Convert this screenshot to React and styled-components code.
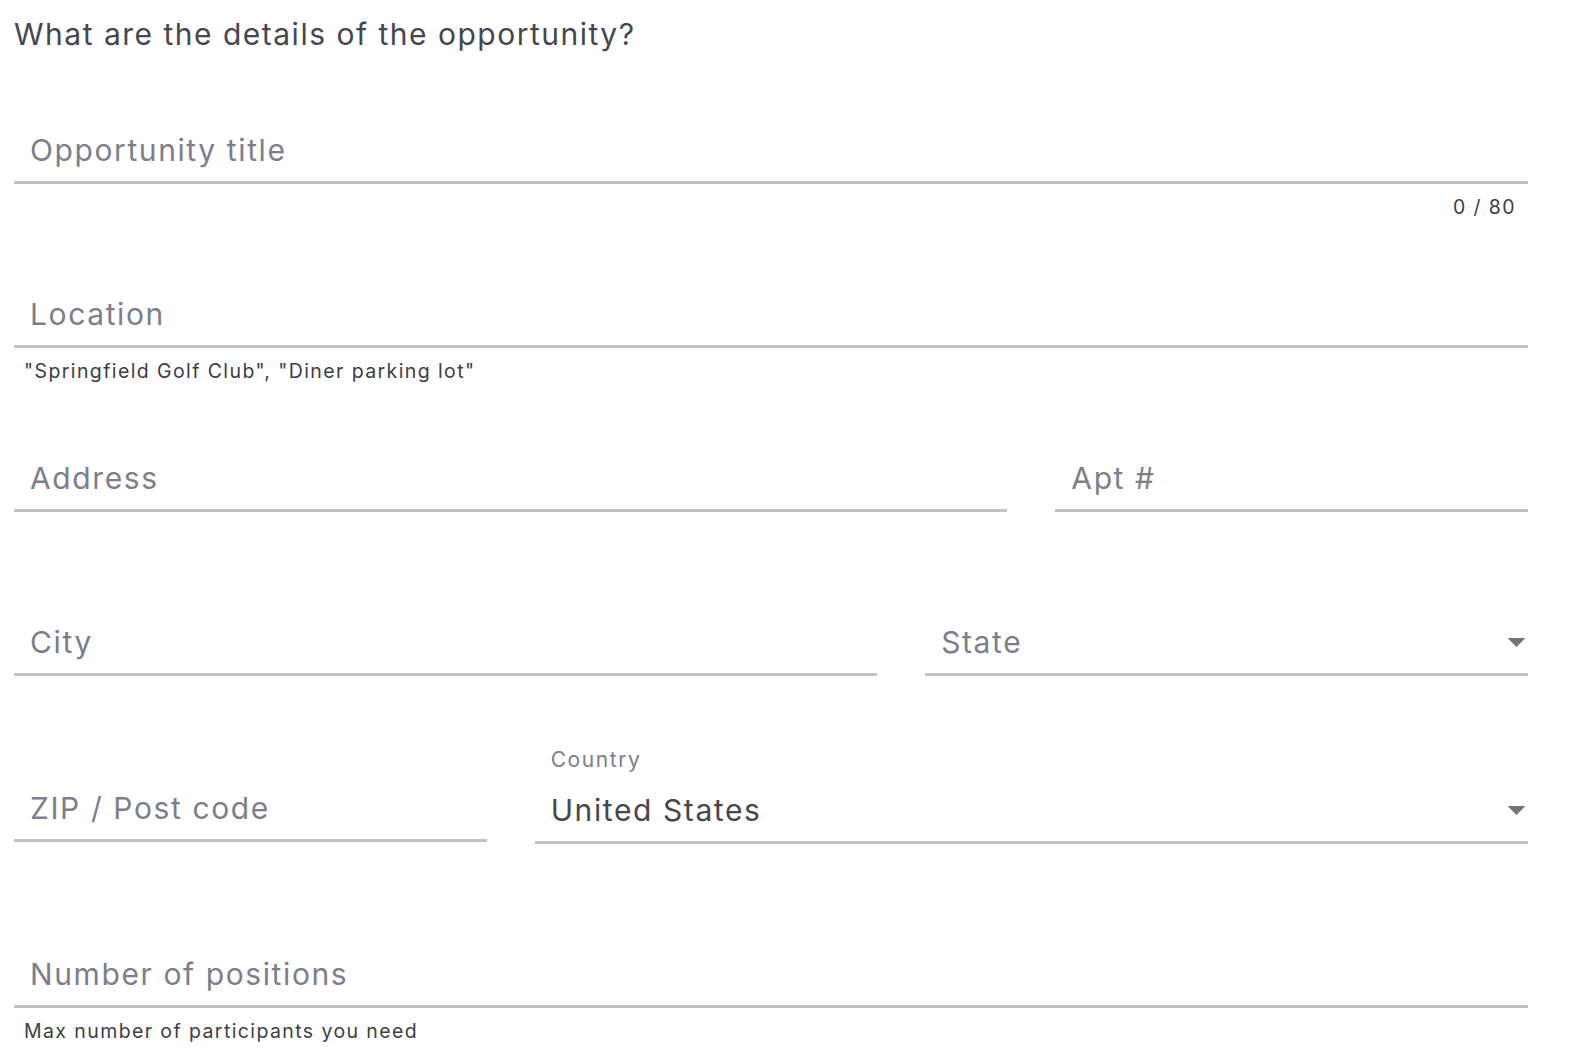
import React from 'react'
import styled, { createGlobalStyle } from 'styled-components'

const Global = createGlobalStyle`
  body {
    margin: 0;
    background: #fff;
    font-family: Inter, "Noto Sans", sans-serif;
  }
`

const Page = styled.div`
  width: 1514px;
  padding: 14px 0 0 14px;
`

const Heading = styled.h1`
  margin: 0 0 38px;
  font-size: 30px;
  line-height: 40px;
  font-weight: 400;
  color: #45464f;
  letter-spacing: 1.5px;
`

const Grid = styled.div`
  display: grid;
  grid-template-columns: repeat(12, 1fr);
  column-gap: 48px;
  row-gap: 37px;
  align-items: start;
`

const Cell = styled.div`
  grid-column: span ${({ span }) => span};
  margin-top: ${({ shift }) => shift || 0}px;
  display: flex;
  flex-direction: column;
  min-width: 0;
`

const FloatLabel = styled.div`
  height: ${({ tall }) => (tall ? 40 : 36)}px;
  padding: 0 16px;
  font-size: 21px;
  line-height: 24px;
  color: #7c7e8c;
  letter-spacing: 1.6px;
`

const InputRow = styled.div`
  height: 56px;
  padding: 4px 0 0 16px;
  box-sizing: border-box;
  display: flex;
  align-items: flex-start;
  justify-content: space-between;
  border-bottom: 3px solid #c2c2c2;
  font-size: 30px;
  line-height: 36px;
  letter-spacing: 1.6px;
  color: ${({ filled }) => (filled ? '#45464f' : '#7c7e8c')};
`

const Helper = styled.div`
  margin-top: 11px;
  height: 24px;
  padding: 0 12px 0 10px;
  font-size: 19.5px;
  line-height: 24px;
  letter-spacing: 1.4px;
  color: #3c3d45;
  text-align: ${({ right }) => (right ? 'right' : 'left')};
`

const ArrowBox = styled.svg`
  width: 43px;
  height: 43px;
  margin: -4px -10px 0 0;
  flex-shrink: 0;
`

const Arrow = () => (
  <ArrowBox viewBox="0 0 24 24">
    <path d="M7 10l5 5 5-5z" fill="#757575" />
  </ArrowBox>
)

const Field = ({ span, label, placeholder, value, helper, right, select, shift }) => (
  <Cell span={span} shift={shift}>
    <FloatLabel tall={!!label}>{label}</FloatLabel>
    <InputRow filled={!!value}>
      <span>{value || placeholder}</span>
      {select && <Arrow />}
    </InputRow>
    <Helper right={right}>{helper}</Helper>
  </Cell>
)

export default function App() {
  return (
    <Page>
      <Global />
      <Heading>What are the details of the opportunity?</Heading>
      <Grid>
        <Field span={12} placeholder="Opportunity title" helper="0 / 80" right />
        <Field span={12} placeholder="Location" helper={'"Springfield Golf Club", "Diner parking lot"'} />
        <Field span={8} placeholder="Address" />
        <Field span={4} placeholder="Apt #" />
        <Field span={7} placeholder="City" />
        <Field span={5} placeholder="State" select />
        <Field span={4} placeholder="ZIP / Post code" shift={2} />
        <Field span={8} label="Country" value="United States" select />
        <Field span={12} placeholder="Number of positions" helper="Max number of participants you need" />
      </Grid>
    </Page>
  )
}
